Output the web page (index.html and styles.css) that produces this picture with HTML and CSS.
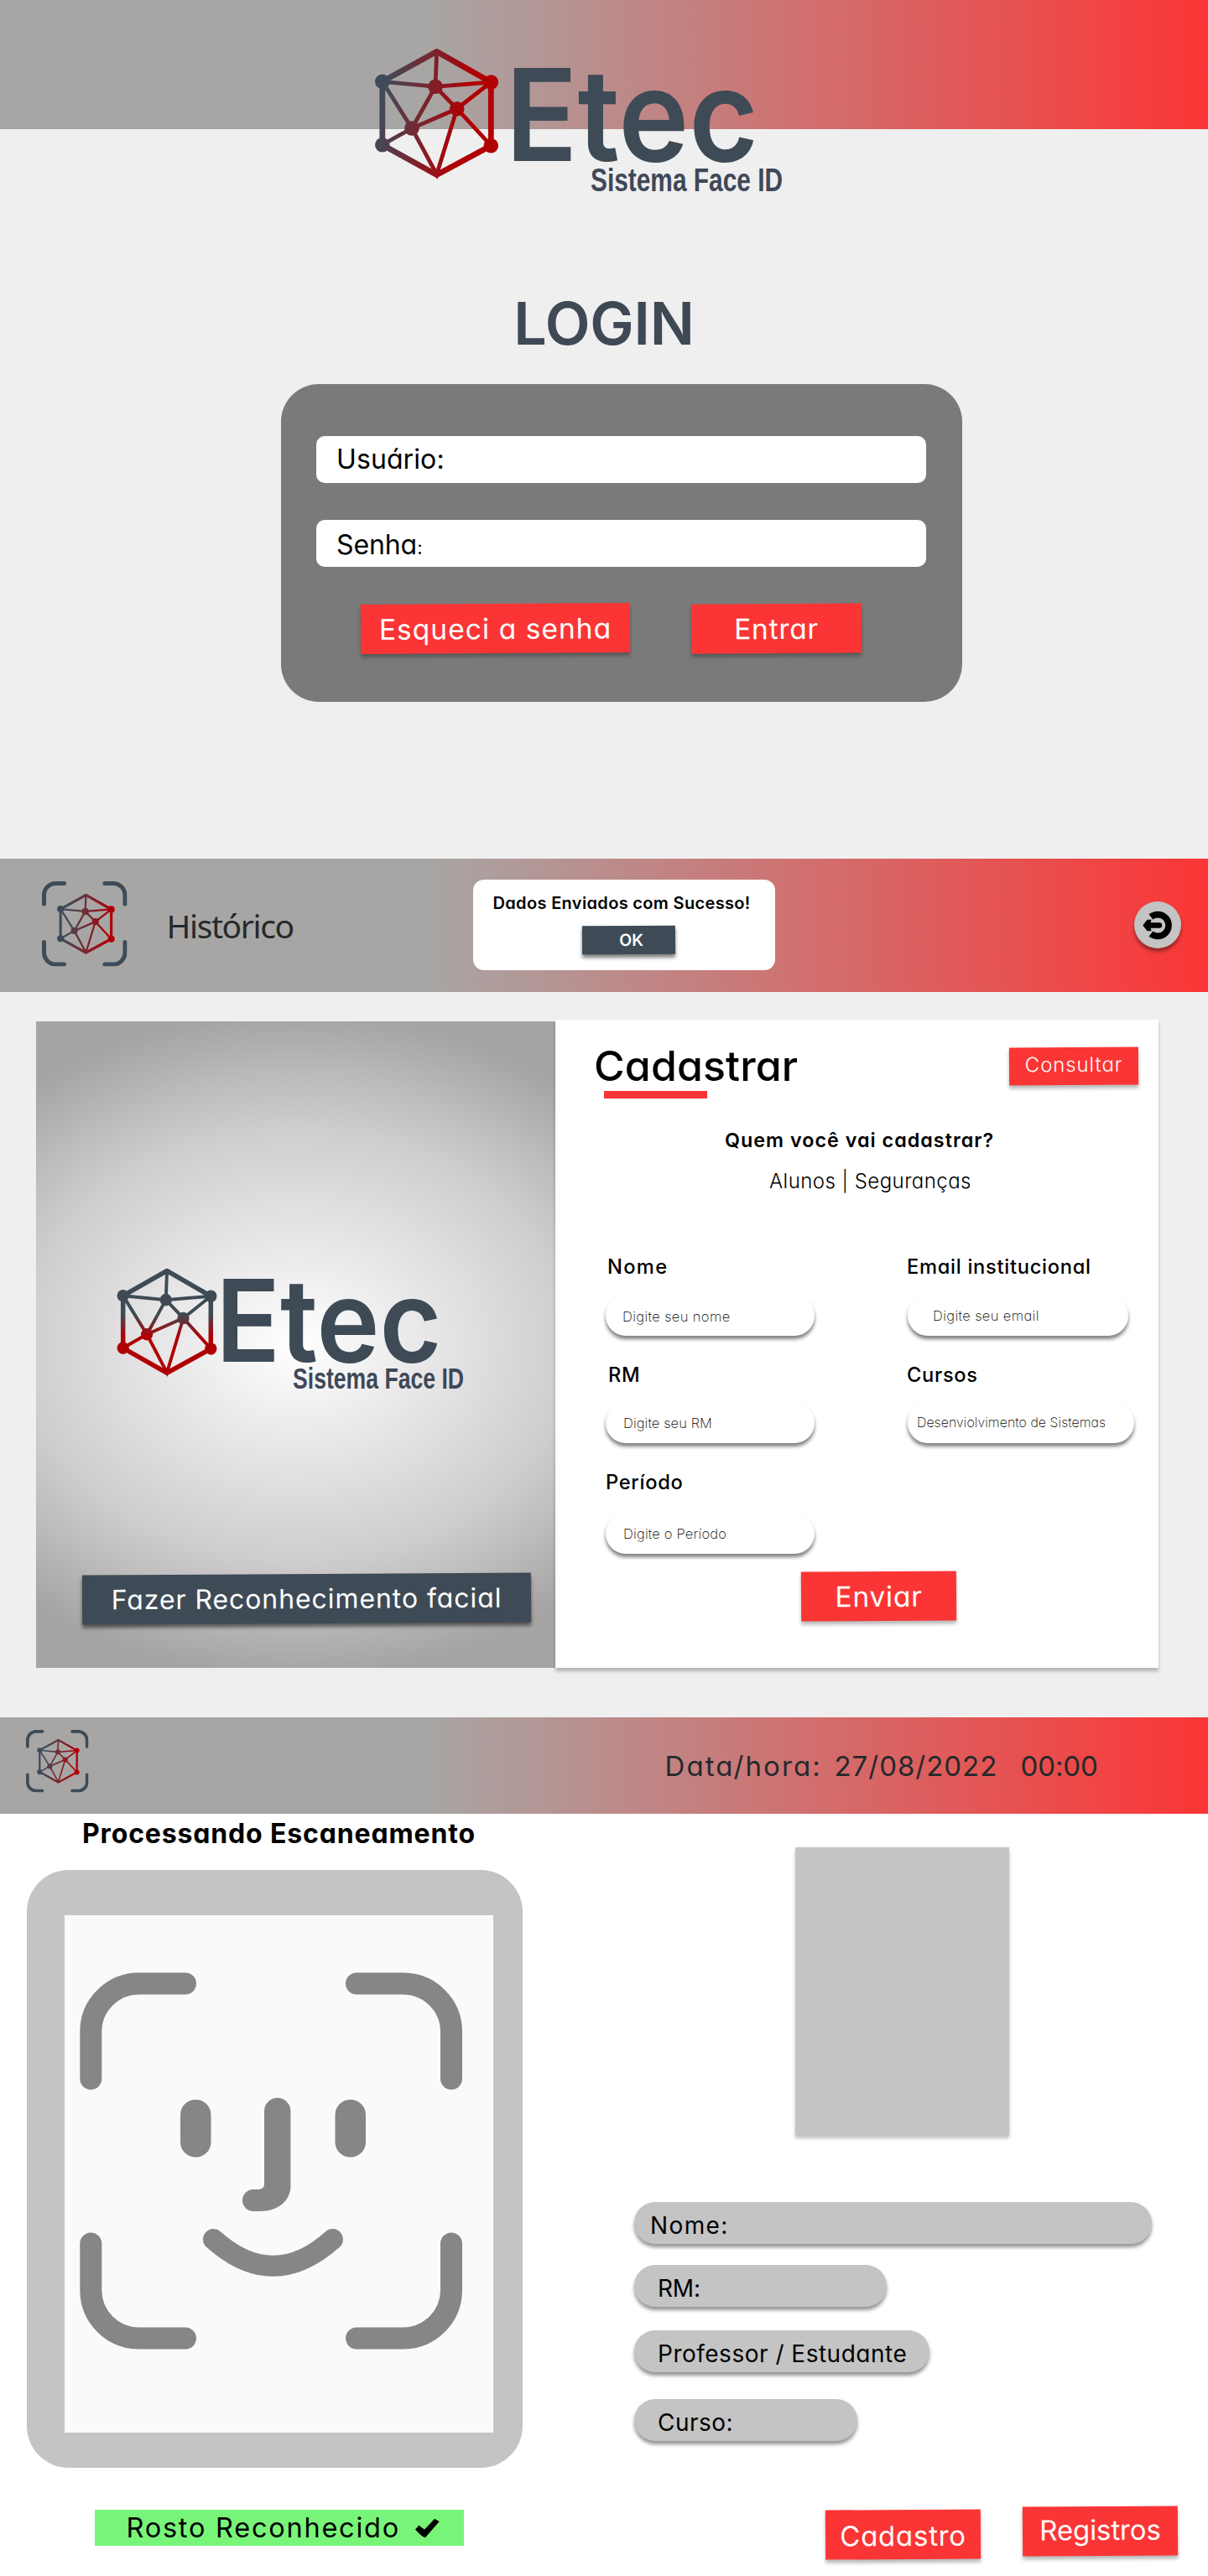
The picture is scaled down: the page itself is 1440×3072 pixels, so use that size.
FILE: index.html
```html
<!DOCTYPE html>
<html lang="pt-BR">
<head>
<meta charset="utf-8">
<title>Etec - Sistema Face ID</title>
<link rel="stylesheet" href="styles.css">
</head>
<body>
<svg class="defs" width="0" height="0" aria-hidden="true">
  <defs>
    <linearGradient id="mesh-side" gradientUnits="userSpaceOnUse" x1="14" y1="70" x2="112" y2="88">
      <stop offset="0" stop-color="#3f4b5b"/><stop offset="1" stop-color="#b00004"/>
    </linearGradient>
    <linearGradient id="mesh-icon" gradientUnits="userSpaceOnUse" x1="30" y1="76" x2="140" y2="90">
      <stop offset="0" stop-color="#3f4b5b"/><stop offset="1" stop-color="#b00004"/>
    </linearGradient>
    <linearGradient id="mesh-down" gradientUnits="userSpaceOnUse" x1="0" y1="74" x2="0" y2="106">
      <stop offset="0" stop-color="#3e4b54"/><stop offset="1" stop-color="#b00004"/>
    </linearGradient>
    <g id="mesh">
      <path fill="none" stroke-width="6.8" stroke-linejoin="round" d="M80.6 11.5 15.8 47.3V122.7L80.6 158.5 145.3 123.7V48Z"/>
      <path fill="none" stroke-width="4.8" d="M80.6 12 79 53.3M15.8 47.3 79 53.3 145.3 48M79 53.3 104.7 79.7 145.3 48M15.8 47.3 51 103 79 53.3M51 103 104.7 79.7 145.3 123.7M15.8 122.7 51 103 80.6 158 104.7 79.7"/>
      <g stroke="none">
        <circle cx="15.8" cy="47.3" r="8.8"/><circle cx="145.3" cy="48" r="8.8"/>
        <circle cx="15.8" cy="122.7" r="8.8"/><circle cx="145.3" cy="123.7" r="8.8"/>
        <circle cx="79" cy="53.3" r="8.8"/><circle cx="104.7" cy="79.7" r="8.8"/><circle cx="51" cy="103" r="8.8"/>
      </g>
    </g>
    <symbol id="scan-logo" viewBox="0 0 101.5 101.5">
      <path fill="none" stroke="#3e4b57" stroke-width="5" stroke-linecap="round" d="M26.5 2.5H16.5A14 14 0 0 0 2.5 16.5V27M75 2.5H85A14 14 0 0 1 99 16.5V27M2.5 72.5V85A14 14 0 0 0 16.500 99H26.5M99 72.5V85A14 14 0 0 1 85 99H75"/>
      <use href="#mesh" transform="translate(14.8 11) scale(.467)" fill="url(#mesh-icon)" stroke="url(#mesh-icon)"/>
    </symbol>
  </defs>
</svg>

<section class="screen login">
  <header class="topbar topbar-login"></header>
  <svg class="login-logo" width="510" height="190" viewBox="0 0 510 190">
    <use href="#mesh" fill="url(#mesh-side)" stroke="url(#mesh-side)"/>
    <text class="brand" x="162.500" y="142" font-size="152" textLength="301.500" lengthAdjust="spacingAndGlyphs">Etec</text>
    <text class="tagline" x="264" y="178" font-size="38" textLength="229" lengthAdjust="spacingAndGlyphs">Sistema Face ID</text>
  </svg>
  <h1 class="login-title">LOGIN</h1>
  <form class="login-card">
    <div class="login-field user">Usuário:</div>
    <div class="login-field pass">Senha<small>:</small></div>
    <div class="login-actions">
      <div class="btn forgot">Esqueci a senha</div>
      <div class="btn enter">Entrar</div>
    </div>
  </form>
</section>

<section class="screen register">
  <header class="topbar topbar-register">
    <svg class="scan-logo"><use href="#scan-logo"/></svg>
    <nav class="history">Histórico</nav>
    <div class="toast">
      <p class="toast-text">Dados Enviados com Sucesso!</p>
      <div class="btn dark ok">OK</div>
    </div>
    <div class="exit">
      <svg width="36" height="36" viewBox="0 0 36 36">
        <path fill="none" stroke="#000" stroke-width="7.600" d="M10 8.500A12.900 12.900 0 1 1 10 28.500"/>
        <path d="M.3 18.500 5.500 11.700H10.600L9.600 15.300H20A3.200 3.200 0 0 1 20 21.700H9.600L10.600 25.300H5.500Z"/>
      </svg>
    </div>
  </header>
  <div class="register-body">
    <aside class="face-panel">
      <svg class="panel-logo" width="430" height="160" viewBox="0 0 430 160">
        <use href="#mesh" transform="translate(-6.1 1) scale(.808 .828)" fill="url(#mesh-down)" stroke="url(#mesh-down)"/>
        <text class="brand" x="117.300" y="119" font-size="136.500" textLength="269" lengthAdjust="spacingAndGlyphs">Etec</text>
        <text class="tagline" x="209" y="151" font-size="34.500" textLength="204" lengthAdjust="spacingAndGlyphs">Sistema Face ID</text>
      </svg>
      <div class="btn dark scan">Fazer Reconhecimento facial</div>
    </aside>
    <main class="form-card">
      <div class="form-head">
        <h2 class="form-title">Cadastrar</h2>
        <div class="btn consult">Consultar</div>
      </div>
      <div class="underline"></div>
      <p class="question">Quem você vai cadastrar?</p>
      <p class="choices">Alunos | Seguranças</p>
      <div class="fields">
        <div class="field"><label class="label nome">Nome</label><div class="input in-nome">Digite seu nome</div></div>
        <div class="field"><label class="label email">Email institucional</label><div class="input in-email">Digite seu email</div></div>
        <div class="field"><label class="label rm">RM</label><div class="input in-rm">Digite seu RM</div></div>
        <div class="field"><label class="label cursos">Cursos</label><div class="input in-curso">Desenviolvimento de Sistemas</div></div>
        <div class="field"><label class="label periodo">Período</label><div class="input in-periodo">Digite o Período</div></div>
      </div>
      <div class="btn send">Enviar</div>
    </main>
  </div>
</section>

<section class="screen scanner">
  <header class="topbar topbar-scanner">
    <svg class="scan-logo small"><use href="#scan-logo"/></svg>
    <span class="when">Data/hora:</span><span class="date">27/08/2022</span><span class="time">00:00</span>
  </header>
  <div class="scanner-body">
    <div class="scan-col">
      <h2 class="scan-title">Processando Escaneamento</h2>
      <div class="frame">
        <svg class="face" width="511" height="617" viewBox="77 2284 511 617">
          <g fill="none" stroke="#868686" stroke-width="26" stroke-linecap="round">
            <path d="M221 2365.500H166A57.500 57.500 0 0 0 108.300 2423V2479"/>
            <path d="M425 2365.500H480A57.500 57.500 0 0 1 538 2423V2479"/>
            <path d="M108.300 2675.500V2731.500A57.500 57.500 0 0 0 166 2788.500H221"/>
            <path d="M538 2675.500V2731.500A57.500 57.500 0 0 1 480 2788.500H425"/>
            <path stroke-width="25" d="M254.500 2670.500Q325.500 2734 396.500 2670.500"/>
          </g>
          <g fill="#868686">
            <rect x="215" y="2504" width="36.500" height="68.500" rx="18"/>
            <rect x="399.500" y="2504" width="36.500" height="68.500" rx="18"/>
            <path d="M315 2517.500A15.700 15.700 0 0 1 346.400 2517.500V2607C346.400 2624 332 2637 310 2637H302A13 13 0 0 1 302 2611H308Q315 2611 315 2604.500Z"/>
          </g>
        </svg>
      </div>
      <div class="recognized">Rosto Reconhecido
        <svg width="31" height="24" viewBox="0 0 31 24"><path d="M1 13.500 5.500 8.500Q8 11 12 13.500L24 .8 29.700 4 13 23.200Q10 23.500 1 13.500Z"/></svg>
      </div>
    </div>
    <div class="data-col">
      <div class="photo"></div>
      <div class="pill p-nome">Nome:</div>
      <div class="pill p-rm">RM:</div>
      <div class="pill p-role">Professor / Estudante</div>
      <div class="pill p-curso">Curso:</div>
      <div class="scanner-actions">
        <div class="btn cadastro">Cadastro</div>
        <div class="btn registros">Registros</div>
      </div>
    </div>
  </div>
</section>
</body>
</html>
```
FILE: styles.css
```css
* { box-sizing: border-box; }
body {
  margin: 0;
  width: 1440px;
  background: #efefef;
  color: #000;
  font-family: Inter, "Open Sans", sans-serif;
  font-feature-settings: "cv11";
}
h1, h2, p { margin: 0; }
svg { display: block; flex: none; overflow: visible; }
.defs { position: absolute; }
.screen { position: relative; height: 1024px; overflow: hidden; display: flow-root; }

.topbar {
  display: flex;
  align-items: center;
  background: linear-gradient(90deg, #a7a6a4 35.5%, #b19998 43%, #fc3535 100%);
}
.brand { font-family: Inter, sans-serif; font-weight: 600; fill: #3e4b56; font-feature-settings: normal; }
.tagline { font-family: "Liberation Sans", Arial, sans-serif; font-weight: 700; fill: #3e4858; }

.btn {
  display: flex;
  align-items: center;
  justify-content: center;
  flex: none;
  background: #fb3535;
  color: #fff;
  white-space: nowrap;
  box-shadow: 0 4px 4px rgba(0, 0, 0, .28);
  transform: rotate(-.36deg);
}
.btn.dark { background: #3e4b56; box-shadow: 0 4px 4px rgba(0, 0, 0, .5); }

/* Login */
.topbar-login { height: 154px; }
.login-logo { position: absolute; left: 440px; top: 50px; }
.login-title {
  margin-top: 197px;
  text-align: center;
  font-size: 70px;
  line-height: 70px;
  font-weight: 600;
  letter-spacing: -.2px;
  color: #3e4955;
}
.login-card {
  width: 812px;
  height: 379px;
  margin: 37px 0 0 335px;
  padding: 62px 43px 0 42px;
  border-radius: 45px;
  background: #7a7a7a;
}
.login-field {
  height: 56px;
  padding-left: 24px;
  border-radius: 10px;
  background: #fff;
  font-size: 32px;
  line-height: 56px;
}
.user { letter-spacing: .1px; }
.pass { margin-top: 44px; line-height: 60px; letter-spacing: -.1px; }
.pass small { font-size: 22px; }
.login-actions { display: flex; gap: 73px; margin: 44px 0 0 53px; }
.forgot, .enter { height: 59px; font-size: 33.5px; }
.forgot { width: 321px; letter-spacing: 1.05px; }
.enter { width: 203px; letter-spacing: .8px; }

/* Register */
.topbar-register { height: 159px; padding-left: 50px; }
.scan-logo { width: 101.5px; height: 101.5px; margin-top: -3px; }
.history {
  width: 152px;
  margin-left: 47px;
  font: 400 39px/50px "Noto Sans", sans-serif;
  letter-spacing: -1.4px;
  color: #25292c;
}
.toast {
  width: 360px;
  height: 108px;
  margin: -2px 0 0 213px;
  padding-top: 16px;
  border-radius: 13px;
  background: #fff;
}
.toast-text {
  padding-left: 24px;
  font-size: 20px;
  line-height: 24px;
  font-weight: 600;
  letter-spacing: .34px;
  white-space: nowrap;
}
.ok {
  width: 111px;
  height: 34px;
  margin: 15px 0 0 130px;
  padding-left: 6px;
  font-size: 19.5px;
  font-weight: 600;
}
.exit {
  display: flex;
  align-items: center;
  justify-content: center;
  width: 56px;
  height: 56px;
  margin: -1px 0 0 428px;
  border-radius: 50%;
  background: #c4c4c4;
  box-shadow: 0 4px 4px rgba(0, 0, 0, .4);
}
.register-body { display: flex; align-items: flex-start; margin: 33px 0 0 43px; }
.face-panel {
  width: 619px;
  height: 771px;
  margin-top: 2px;
  padding: 287px 0 0 55px;
  background: radial-gradient(500px 392px at 310px 385px, #fff 0, #cfccce 66%, #a6a5a3 100%);
}
.panel-logo { margin-left: 42px; }
.scan { width: 535px; height: 59px; margin-top: 212px; font-size: 32px; letter-spacing: .92px; transform: rotate(-.33deg); }
.form-card {
  width: 719px;
  height: 773px;
  padding: 25px 24px 0 46px;
  background: #fff;
  box-shadow: 0 4px 4px rgba(0, 0, 0, .25);
}
.form-head { display: flex; align-items: center; justify-content: space-between; height: 60px; }
.form-title { font-size: 50px; line-height: 60px; font-weight: 550; letter-spacing: .15px; }
.consult { width: 154px; height: 44.5px; padding-bottom: 3px; font-size: 24px; font-weight: 300; letter-spacing: .9px; }
.underline { width: 123px; height: 9px; margin-left: 12px; background: #fb3535; }
.question {
  margin: 35px 0 0 156px;
  font-size: 23.3px;
  line-height: 30px;
  font-weight: 600;
  letter-spacing: 1.02px;
  white-space: nowrap;
}
.choices { margin: 19px 0 0 209px; font-size: 24px; line-height: 30px; font-weight: 300; letter-spacing: .45px; }
.fields {
  display: grid;
  grid-template-columns: 249px 270px;
  column-gap: 111px;
  row-gap: 32px;
  grid-template-rows: 97px 96px 100px;
  margin: 72px 0 0 14px;
}
.field { display: flex; flex-direction: column; justify-content: space-between; }
.label { font-size: 23.7px; line-height: 30px; font-weight: 500; letter-spacing: .7px; white-space: nowrap; }
.nome { padding-left: 2px; letter-spacing: 1.3px; }
.rm { padding-left: 3px; }
.email, .cursos { margin-left: -1px; }
.input {
  width: 249px;
  height: 48px;
  border-radius: 24px;
  background: #fff;
  box-shadow: 0 4px 4px rgba(0, 0, 0, .5);
  font-size: 16.5px;
  line-height: 48px;
  font-weight: 200;
  letter-spacing: .38px;
  white-space: nowrap;
}
.in-nome { padding-left: 20px; line-height: 51px; }
.in-email { width: 263px; padding-left: 30px; }
.in-rm { padding-left: 21px; letter-spacing: .1px; }
.in-curso { width: 270px; padding-left: 11px; font-size: 15.8px; letter-spacing: .1px; }
.in-periodo { padding-left: 21px; letter-spacing: .2px; }
.send { width: 185px; height: 59px; margin: 21px 0 0 247px; font-size: 33.5px; letter-spacing: .75px; }

/* Scanner */
.scanner { background: #fff; }
.topbar-scanner { height: 115px; padding-left: 31px; font-size: 33px; color: #25292c; white-space: nowrap; }
.scan-logo.small { width: 74.5px; height: 74.5px; margin-top: -10px; }
.when { width: 193px; margin-left: 687px; letter-spacing: 2.1px; }
.date { width: 197px; margin-left: 9px; letter-spacing: .98px; }
.time { margin-left: 25px; letter-spacing: -.1px; }
.scanner-body { display: flex; }
.scan-col { width: 756px; padding: 4px 0 0 32px; }
.scan-title { padding-left: 66px; font-size: 32px; line-height: 40px; font-weight: 700; letter-spacing: .85px; }
.frame {
  width: 591px;
  height: 713px;
  margin-top: 23px;
  padding: 54px 0 0 45px;
  border-radius: 50px;
  background: #c4c4c4;
}
.face { background: #fafafa; }
.recognized {
  display: flex;
  align-items: center;
  gap: 17px;
  width: 440px;
  height: 43px;
  margin: 50px 0 0 81px;
  padding-left: 37.5px;
  background: #78f578;
  font-size: 32.5px;
  letter-spacing: 1.75px;
  white-space: nowrap;
}
.photo {
  width: 255px;
  height: 343px;
  margin: 40px 0 80px 192px;
  background: #c4c4c4;
  box-shadow: 0 4px 4px rgba(0, 0, 0, .25);
}
.pill {
  height: 50px;
  padding-left: 28px;
  border-radius: 25px;
  background: #c4c4c4;
  box-shadow: 0 4px 4px rgba(0, 0, 0, .42);
  font-size: 28px;
  line-height: 57px;
  letter-spacing: .5px;
  white-space: nowrap;
}
.p-nome { width: 617px; padding-left: 19px; letter-spacing: 1.4px; }
.p-rm { width: 301px; margin-top: 25px; letter-spacing: -.2px; }
.p-role { width: 352px; margin-top: 28px; }
.p-curso { width: 266px; margin-top: 32px; }
.scanner-actions { display: flex; gap: 50px; margin: 78px 0 0 228px; }
.cadastro, .registros { width: 185px; height: 59px; font-size: 33px; }
.cadastro { margin-top: 4px; padding-top: 2px; letter-spacing: .75px; }
.registros { padding-bottom: 4px; letter-spacing: -.1px; }
```
